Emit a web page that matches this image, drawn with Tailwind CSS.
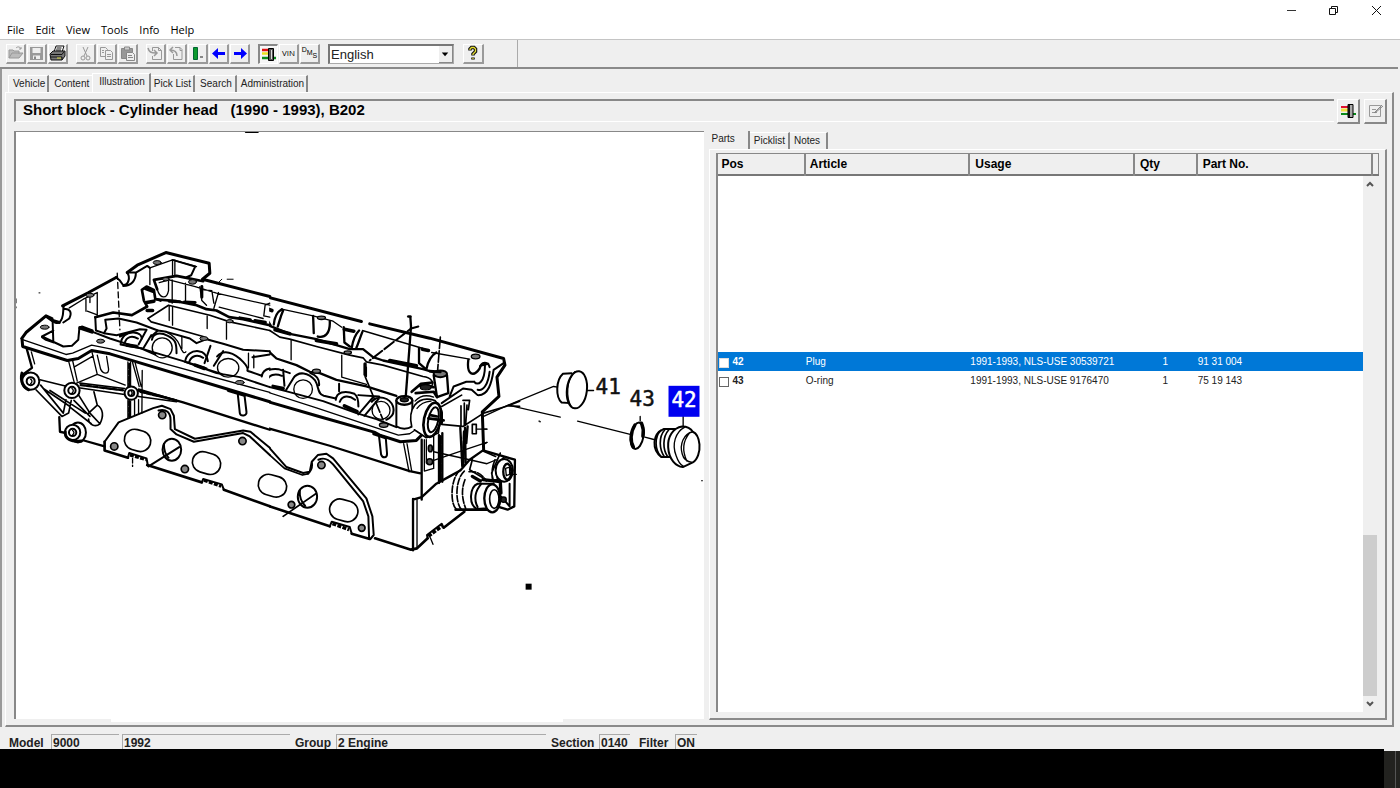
<!DOCTYPE html>
<html lang="en">
<head>
    <meta charset="UTF-8">
    <meta name="viewport" content="width=device-width, initial-scale=1.0">
    <title>Parts Catalogue - Short block - Cylinder head</title>
    <script src="https://cdn.jsdelivr.net/npm/@tailwindcss/browser@4"></script>
</head>
<body class="bg-[#efefef] font-['Liberation_Sans',Arial,sans-serif] text-black min-h-screen flex flex-col">

    <!-- Window bar and menu -->
    <header class="bg-white border-b border-[#c4c4c4]">
        <div class="flex justify-end h-5 gap-[22px] pr-[14px]">
            <button aria-label="Minimize" class="w-5 h-5"><svg viewBox="0 0 20 20" fill="none" stroke="#333"><path d="M5 10.500h9"/></svg></button>
            <button aria-label="Restore" class="w-5 h-5"><svg viewBox="0 0 20 20" fill="none" stroke="#111"><path d="M5.500 8.500h6v6h-6zM7.500 8.500v-2h6v6h-2"/></svg></button>
            <button aria-label="Close" class="w-5 h-5"><svg viewBox="0 0 20 20" fill="none" stroke="#111"><path d="M6 6l9 9M15 6l-9 9"/></svg></button>
        </div>
        <nav class="flex items-center h-[19px] pt-[2px] pl-[7px] gap-[11px] text-[11px] font-['Open_Sans','Noto_Sans',sans-serif]">
            <button>File</button>
            <button>Edit</button>
            <button>View</button>
            <button>Tools</button>
            <button>Info</button>
            <button>Help</button>
        </nav>
    </header>

    <!-- Toolbar -->
    <div class="flex items-center h-[29px] pl-[6px] border-b-2 border-[#8a8a8a] mr-[2px]">
        <div class="flex gap-px">
            <button aria-label="Open" class="w-5 h-5 border-t border-l border-t-white border-l-white border-r-2 border-b-2 border-r-[#9a9a9a] border-b-[#9a9a9a]"><svg viewBox="0 0 17 17" fill="none" stroke="#999"><path d="M2 13V5h4l1 1h5v3M2 13l3-5h11l-4 5z" fill="#bbb"/><path d="M9 3c2-2 4-1 5 1m0-2v2h-2"/></svg></button>
            <button aria-label="Save" class="w-5 h-5 border-t border-l border-t-white border-l-white border-r-2 border-b-2 border-r-[#9a9a9a] border-b-[#9a9a9a]"><svg viewBox="0 0 17 17"><path d="M2 2h13v13H2z" fill="#999"/><path d="M4.500 3h8v5h-8zM5 10.500h7V14H5z" fill="#efefef"/><path d="M6 11.500h2V14H6z" fill="#888"/></svg></button>
            <button aria-label="Print" class="w-5 h-5 border-t border-l border-t-white border-l-white border-r-2 border-b-2 border-r-[#9a9a9a] border-b-[#9a9a9a]"><svg viewBox="0 0 17 17" stroke="#111"><path d="M5 7l2-6h8l-2 6" fill="#fff"/><path d="M7.500 3h5M7 5h5"/><path d="M1 9l3-3h12v5l-3 4H2z" fill="#777"/><path d="M2 9.500h11l2-3M2 12h11v3" fill="none"/><path d="M8 13h4" stroke="#dddd40"/></svg></button>
        </div>
        <div class="flex gap-px ml-2">
            <button aria-label="Cut" class="w-5 h-5 border-t border-l border-t-white border-l-white border-r-2 border-b-2 border-r-[#9a9a9a] border-b-[#9a9a9a]"><svg viewBox="0 0 17 17" fill="none" stroke="#999"><path d="M6 2l4 9M11 2l-4 9"/><circle cx="6" cy="13" r="2"/><circle cx="11" cy="13" r="2"/></svg></button>
            <button aria-label="Copy" class="w-5 h-5 border-t border-l border-t-white border-l-white border-r-2 border-b-2 border-r-[#9a9a9a] border-b-[#9a9a9a]"><svg viewBox="0 0 17 17" fill="#efefef" stroke="#999"><path d="M2.500 2.500h5l2 2v7h-7z"/><path d="M7.500 5.500h5l2 2v7h-7zM9 9.500h4M9 11.500h4M4 5.500h2M4 7.500h2"/></svg></button>
            <button aria-label="Paste" class="w-5 h-5 border-t border-l border-t-white border-l-white border-r-2 border-b-2 border-r-[#9a9a9a] border-b-[#9a9a9a]"><svg viewBox="0 0 17 17" stroke="#888"><path d="M2.500 3.500h11v10h-11z" fill="#999"/><path d="M5.500 2h5v3h-5z" fill="#ccc"/><path d="M7.500 7.500h6l2 2v6h-8z" fill="#eee"/><path d="M9 10.500h4M9 12.500h5"/></svg></button>
        </div>
        <div class="flex gap-px ml-2">
            <button aria-label="Import page" class="w-5 h-5 border-t border-l border-t-white border-l-white border-r-2 border-b-2 border-r-[#9a9a9a] border-b-[#9a9a9a]"><svg viewBox="0 0 17 17" fill="none" stroke="#999"><path d="M5.500 6V2.500h6l3 3v9h-9V11M11.500 2.500v3h3"/><path d="M1 3c1 4 3 5 8 5M7 5l3 3-3 3" stroke-width="1.500"/></svg></button>
            <button aria-label="Export page" class="w-5 h-5 border-t border-l border-t-white border-l-white border-r-2 border-b-2 border-r-[#9a9a9a] border-b-[#9a9a9a]"><svg viewBox="0 0 17 17" fill="none" stroke="#999"><path d="M7 2.500h5l2 2v10H5.500V9M12 2.500v3h2"/><path d="M2 5c4 0 7 1 7 6M5 2L2 5l3 3" stroke-width="1.500"/></svg></button>
            <button aria-label="Marker" class="w-5 h-5 border-t border-l border-t-white border-l-white border-r-2 border-b-2 border-r-[#9a9a9a] border-b-[#9a9a9a]"><svg viewBox="0 0 17 17"><path d="M4.500 2.500h4v12h-4z" fill="#0b9a2c" stroke="#063"/><path d="M11 12h3" stroke="#888" stroke-width="2"/></svg></button>
            <button aria-label="Previous" class="w-5 h-5 border-t border-l border-t-white border-l-white border-r-2 border-b-2 border-r-[#9a9a9a] border-b-[#9a9a9a]"><svg viewBox="0 0 17 17" fill="#00f"><path d="M2 8.500l6-5.500v4h7v3H8v4z"/></svg></button>
            <button aria-label="Next" class="w-5 h-5 border-t border-l border-t-white border-l-white border-r-2 border-b-2 border-r-[#9a9a9a] border-b-[#9a9a9a]"><svg viewBox="0 0 17 17" fill="#00f"><path d="M16 8.500L10 3v4H3v3h7v4z"/></svg></button>
        </div>
        <div class="flex gap-px ml-2">
            <button aria-label="Filter" class="w-5 h-5 bg-[#f6f6f6] border-t-2 border-l-2 border-t-[#888] border-l-[#888] border-r border-b border-r-white border-b-white"><svg viewBox="0 0 17 17"><path d="M2 4h7" stroke="#e01010" stroke-width="2.500"/><path d="M2 7.500h7" stroke="#e8e020" stroke-width="2.500"/><path d="M2 12h14" stroke="#0a8a1a" stroke-width="2.500"/><path d="M8.500 2.500h5v12h-5z" fill="#555" stroke="#000"/><path d="M11.500 4v9" stroke="#ddd"/></svg></button>
            <button class="w-5 h-5 text-[8px] leading-none border-t border-l border-t-white border-l-white border-r-2 border-b-2 border-r-[#9a9a9a] border-b-[#9a9a9a] font-['Open_Sans',sans-serif]">VIN</button>
            <button class="w-5 h-5 text-[7px] leading-none border-t border-l border-t-white border-l-white border-r-2 border-b-2 border-r-[#9a9a9a] border-b-[#9a9a9a] flex justify-center pt-px"><span>D</span><span class="pt-[3px]">M</span><span class="pt-[6px]">S</span></button>
        </div>
        <div class="relative ml-2 w-[126px] h-5">
            <select aria-label="Language" class="block appearance-none w-full h-full bg-white border-t-2 border-l-2 border-r border-b border-t-[#777] border-l-[#777] border-r-[#aaa] border-b-[#aaa] pl-px pt-px text-[13px] leading-[16px] text-[#222]"><option>English</option></select>
            <span class="absolute right-px top-[2px] w-[14px] h-[17px] bg-[#efefef] border-r border-b border-[#888] pointer-events-none"><svg viewBox="0 0 14 17"><path d="M3 7h7l-3.500 4z"/></svg></span>
        </div>
        <button aria-label="Help" class="w-[21px] h-5 ml-[9px] border-t border-l border-t-white border-l-white border-r-2 border-b-2 border-r-[#9a9a9a] border-b-[#9a9a9a]"><svg viewBox="0 0 18 17" fill="none"><path d="M6 5.500V4l1.500-1.500h2.500L11.500 4v2.500L9 9v1.500M9 12.500v2" stroke="#111" stroke-width="3.500"/><path d="M6 5V4l1.500-1.500h2.500L11.500 4v2.500L9 9v1M9 13v1" stroke="#e4dc30" stroke-width="1.300"/></svg></button>
        <div class="self-stretch border-l border-[#aaa] ml-[33px]"></div>
    </div>

    <main class="flex-1 flex flex-col border-l-2 border-[#999] pl-[3px] pr-[6px] pt-[4px]">
        <!-- Main tabs -->
        <div role="tablist" class="flex items-end h-[19px] pl-[3px] text-[10px] text-[#222]">
            <button role="tab" class="h-[17px] pl-1 pr-[2px] pb-px border-t border-l border-t-white border-l-white border-r-2 border-r-[#888]">Vehicle</button>
            <button role="tab" class="h-[17px] pl-[5px] pr-[3px] pb-px border-t border-t-white">Content</button>
            <button role="tab" aria-selected="true" class="h-[19px] pl-[6px] pr-[4px] pb-[3px] border-t border-l border-t-white border-l-white border-r-2 border-r-[#888]">Illustration</button>
            <button role="tab" class="h-[17px] pl-[3px] pr-[2px] pb-px border-t border-t-white border-r-2 border-r-[#888]">Pick List</button>
            <button role="tab" class="h-[17px] pl-[5px] pr-[3px] pb-px border-t border-t-white border-r-2 border-r-[#888]">Search</button>
            <button role="tab" class="h-[17px] pl-1 pr-[2px] pb-px border-t border-t-white border-r-2 border-r-[#888]">Administration</button>
        </div>

        <section class="flex-1 flex flex-col border-t border-l border-t-white border-l-white border-r-2 border-b-2 border-r-[#8a8a8a] border-b-[#8a8a8a] pl-2 pr-[5px] pt-[6px] pb-[5px]">
            <!-- Heading row -->
            <div class="flex">
                <h1 class="flex-1 h-[23px] border-t-2 border-l-2 border-[#888] border-b border-b-white pl-[7px] text-[15px] leading-[18px] font-bold whitespace-pre">Short block - Cylinder head   (1990 - 1993), B202</h1>
                <button aria-label="Filter" class="w-[23px] h-[25px] ml-[3px] border-t border-l border-t-white border-l-white border-r-2 border-b-2 border-r-[#888] border-b-[#888]"><svg viewBox="0 0 20 22"><path d="M3 7h7" stroke="#e01030" stroke-width="2"/><path d="M3 10h7" stroke="#f0e040" stroke-width="3"/><path d="M3 14h15" stroke="#0a8a1a" stroke-width="2"/><path d="M10 4.500h5v13h-5z" fill="#aaa" stroke="#000"/><path d="M11 5v12" stroke="#111" stroke-width="2"/></svg></button>
                <button aria-label="Edit note" class="w-[23px] h-[25px] ml-[4px] border-t border-l border-t-white border-l-white border-r-2 border-b-2 border-r-[#888] border-b-[#888]"><svg viewBox="0 0 20 22" fill="none" stroke="#999"><path d="M4.500 5.500h11v11h-11zM7 9.500h4M7 12.500h5"/><path d="M9 13l8-8M10 13l8-7" stroke="#888"/></svg></button>
            </div>

            <div class="flex-1 flex mt-[7px]">
                <!-- Illustration -->
                <div class="relative w-[calc(50%+3px)] flex-none border-l-2 border-t border-[#888] bg-white mb-px">
                    <svg viewBox="16 132 688 587" preserveAspectRatio="xMinYMin meet" class="block w-full" role="img" aria-label="Cylinder head exploded view" fill="none" stroke="#000" stroke-linejoin="round" stroke-linecap="round">
                        <defs>
                            <clipPath id="right-half"><rect x="58" y="-100" width="900" height="1100"/></clipPath>
                        </defs>
                        <path d="M246 132h12" stroke-width="2"/>
                        <path d="M16 299v4M16 307v1M39 293h1M540 422h1M702 481h1"/>
                        <!-- Left half of the head -->
                        <g transform="translate(10 240) scale(.3333)" stroke-width="4">
                            <!-- deck outline -->
                            <path stroke-width="9" d="M35 296L48 278 108 228 126 236M128 242L148 248M158 198L236 158 320 112M352 98L382 76 468 38 598 70 600 100 578 118 780 170M36 296L38 320 172 362 205 356 245 332 300 342 780 486"/>
                            <path d="M40 300L168 344 188 340 245 316 305 328 780 458"/>
                            <path stroke-width="6" d="M128 240C134 254 150 252 156 236S158 210 162 196M160 208C178 204 188 216 178 236L160 248M318 112L330 122 340 136C356 136 362 112 352 98M352 98L378 98C378 122 364 138 340 138M378 98L412 78 420 84"/>
                            <path stroke-width="6" d="M110 232L128 245 130 304M96 290L130 272M96 290L160 320 186 318 205 300 208 268 216 260 248 272M96 292L108 300 132 308"/>
                            <path d="M178 204L220 178 262 158M228 178v36M240 170v18M262 158v74M232 214l28 10M420 84v50M420 84L488 60 560 80M488 60v50M495 60v50"/>
                            <path stroke-width="6" d="M488 60L556 80 544 106 530 112"/>
                            <path stroke-dasharray="18 10" d="M322 100L330 270"/>
                            <path stroke-width="3" d="M622 132L636 118M652 118h18"/>
                            <!-- inner rails -->
                            <path stroke-width="8" d="M432 120L500 108 530 114 580 124M432 120L442 148M396 150L410 140 432 150 436 176 452 182M396 150L402 182 412 200 366 226 310 218 256 232"/>
                            <path d="M442 148C450 176 470 180 476 152V124M448 128L478 120 556 140 620 160 780 196M527 130v52M487 120v70M570 140L576 182 590 196M582 150L606 152 612 190M626 158L612 206M628 202L760 236M780 232L762 228 766 196 780 190"/>
                            <path stroke-width="8" d="M436 178L500 184 560 196 590 208 620 212 658 232 700 238 780 256"/>
                            <path stroke-width="9" stroke-dasharray="32 14" d="M478 184L560 188M690 234L770 248M576 140v44"/>
                            <path stroke-width="5" d="M414 236L476 196 600 226 660 246 780 272M414 236L424 246 580 290"/>
                            <path d="M478 198v44M488 202v54M592 228v38M650 248v50"/>
                            <path stroke-width="6" d="M256 232L258 272 282 280 290 266 286 240 326 236 380 248 444 272 470 276 540 296 560 310 590 298 640 312 700 330 780 334"/>
                            <path stroke-width="6" d="M282 280L320 286 390 268 410 270M410 270L386 314M424 286L400 326M444 272L424 290M356 278L330 290M602 318L584 370M640 334L612 378"/>
                            <path d="M516 290v36M716 340v44M732 346v38M468 276Q500 290 510 318T528 336"/>
                            <!-- bearing caps and journals -->
                            <path stroke-width="6" d="M332 314C334 290 350 276 372 278S394 290 396 296M344 310C350 290 366 286 384 296M526 366C528 344 546 332 566 334S592 350 594 364M538 366C546 346 564 344 580 354M332 314L396 326M526 366L590 386M426 300C430 280 450 276 474 288S500 310 500 340M622 350C640 328 672 336 700 366S700 390 722 396L756 408M728 352L780 344M756 410Q758 390 780 386"/>
                            <path stroke-width="11" d="M210 264L246 276M352 316L380 320M556 376L584 386M408 146l22 8M410 188l22-4M412 212h16"/>
                            <circle cx="457" cy="324" r="30" fill="#fff"/><ellipse cx="655" cy="384" rx="32" ry="28" fill="#fff"/>
                            <path stroke-width="6" d="M248 276L300 296 400 328 520 364 620 400 690 412 780 442M395 326L436 344M590 388L640 404"/>
                            <!-- stud holes -->
                            <g fill="#777" stroke-width="3"><ellipse cx="104" cy="262" rx="13" ry="6"/><ellipse cx="240" cy="166" rx="12" ry="6"/><ellipse cx="442" cy="68" rx="12" ry="6"/><ellipse cx="548" cy="126" rx="12" ry="7"/><ellipse cx="468" cy="118" rx="10" ry="5"/><ellipse cx="272" cy="304" rx="12" ry="6"/><ellipse cx="582" cy="296" rx="12" ry="6"/><ellipse cx="690" cy="428" rx="13" ry="6"/><ellipse cx="660" cy="244" rx="10" ry="5"/></g>
                            <!-- left wall -->
                            <path stroke-width="7" d="M50 326L66 384 34 408 40 420M382 452L450 468 520 488 780 570M148 532L150 576 168 580M214 600L284 620"/>
                            <path d="M64 336L74 372M176 364L194 432M188 362L202 424M246 336L262 404 200 430M192 382L250 348M262 404L346 436M262 346L272 388C280 404 296 404 296 388L290 350M354 366V440M362 366V440M368 368L388 440M376 370L394 440M354 482V534M362 484V530M374 482V526M386 480V524M397 392L396 520"/>
                            <path stroke-width="7" stroke-dasharray="14 5" d="M358 372v66M358 484v46M212 436L344 452M392 456L500 482"/>
                            <path stroke-width="5" d="M90 420L172 440M92 436L160 520 168 480M78 450L156 530 176 520 184 482M100 446L180 500M120 452L226 520M210 430L344 446M206 444L344 464M206 466L240 520 270 552M192 482L240 530M252 456L262 496M262 496C280 506 282 530 270 552 256 564 236 554 236 538M236 520L262 496M180 502L244 552M386 448L500 482M386 470L500 486"/>
                            <g fill="#fff" stroke-width="6"><circle cx="62" cy="424" r="26"/><circle cx="62" cy="424" r="12"/><circle cx="186" cy="452" r="23"/><circle cx="186" cy="452" r="11"/><circle cx="364" cy="460" r="20"/><circle cx="364" cy="460" r="9"/><ellipse cx="204" cy="578" rx="24" ry="30"/><circle cx="188" cy="578" r="23"/><circle cx="188" cy="578" r="11"/></g>
                            <path stroke-width="9" d="M36 400C30 424 40 444 56 450M166 576C164 596 180 606 214 604"/>
                            <path d="M62 418q8 6 0 14M186 446q8 6 0 14M188 572q8 6 0 14M364 454q6 6 0 12"/>
                            <path stroke-width="6" fill="#fff" d="M684 464L690 520C692 530 712 530 710 516L704 466"/>
                            <path stroke-width="10" d="M656 452L704 466"/>
                            <!-- manifold flange -->
                            <path stroke-width="6" d="M284 606L326 548 430 505 456 498 482 508 492 528 495 568 555 597 700 572 722 576 780 624M446 512C470 506 482 520 482 540V568L500 584 552 606 700 580 720 590 780 646"/>
                            <path stroke-width="8" d="M284 606L284 632 354 654M412 676L576 728M642 750L780 800"/>
                            <path stroke-width="6" d="M354 654L358 640 410 656 414 678M576 728L580 718 636 734 642 750"/>
                            <path stroke-width="9" stroke-dasharray="12 4" stroke-linecap="butt" d="M360 646L408 660M582 722L634 740"/>
                            <path stroke-dasharray="14 6" d="M368 656v24"/>
                            <rect x="343" y="571" width="80" height="62" rx="31" transform="rotate(16 383 602)" stroke-width="5"/>
                            <rect x="547" y="639" width="86" height="62" rx="31" transform="rotate(16 590 670)" stroke-width="5"/>
                            <rect x="745" y="707" width="86" height="62" rx="31" transform="rotate(16 788 738)" stroke-width="5"/>
                            <ellipse cx="486" cy="630" rx="28" ry="33" stroke-width="6"/><path d="M462 612Q462 640 476 654M416 680L508 622" stroke-width="6"/>
                            <g fill="#888" stroke-width="5"><circle cx="457" cy="526" r="11"/><circle cx="313" cy="620" r="11"/><circle cx="525" cy="688" r="11"/><circle cx="698" cy="604" r="11"/></g>
                        </g>
                        <!-- Right half of the head -->
                        <g transform="translate(250 280) scale(.3333)" stroke-width="4" clip-path="url(#right-half)">
                            <path stroke-width="9" d="M0 38L335 125M360 132L540 175 762 236 766 256 742 292 748 350 698 396 702 510"/>
                            <path d="M0 62L56 80M96 88L190 108 250 124 276 142M338 152L500 200 520 206M546 218L660 238M0 76L46 88"/>
                            <path stroke-width="7" d="M44 82L46 110 62 136M96 88C82 96 74 110 72 134M100 92C92 110 90 120 84 140M190 108L192 160M240 124C242 160 226 176 204 170M282 142L284 188 300 200M328 152C314 166 310 180 306 204M338 156C330 176 326 190 320 204M508 204V250L526 266M560 218C546 226 536 240 530 268M656 240C650 290 674 290 690 266 694 250 704 246 714 252"/>
                            <path stroke-width="11" d="M46 84l20 8M284 148l28 6M518 208l18 4M0 124L40 128M76 150L120 162M200 182L260 192M420 242L500 258"/>
                            <path stroke-width="7" d="M0 134L60 138 120 162 200 178 260 196 300 208 340 208 370 232 400 242 520 268 548 276"/>
                            <path stroke-width="5" d="M0 150L60 152 90 172 120 178 200 200 300 226 340 234 350 246 400 256 520 290C548 292 552 312 546 318"/>
                            <path d="M124 182v58M276 226v66M276 292L350 314M350 262v28"/>
                            <path stroke-width="10" d="M346 252v32"/>
                            <path stroke-width="7" d="M56 214L80 236 140 256 180 276 210 280 260 300 350 320 440 348"/>
                            <path stroke-width="6" d="M36 300C38 276 60 264 86 268L120 280M50 306C56 284 76 280 96 288M100 270L104 318M134 290L108 332M130 296C146 272 176 278 196 302 208 320 202 342 222 348L258 356M258 360C260 338 284 330 314 342 326 350 326 370 326 380M270 366C278 346 298 346 316 360M326 346L388 350M372 350L326 404M388 356L344 408M366 366C384 344 420 352 430 380 436 402 424 414 410 420M182 280Q210 290 208 316M268 312v22"/>
                            <circle cx="160" cy="328" r="28" fill="#fff"/><circle cx="394" cy="392" r="27" fill="#fff"/>
                            <path stroke-width="11" d="M70 320L100 326M284 378L322 396"/>
                            <path stroke-width="6" d="M0 302L60 322 108 334 220 364 320 400 380 418 440 442"/>
                            <path stroke-width="4" d="M0 320L200 384 380 444 446 466 480 462 512 440"/>
                            <path stroke-width="9" d="M0 350L200 408 376 458 390 466 452 486 500 482 520 462"/>
                            <!-- studs and construction lines -->
                            <path stroke-width="7" d="M482 112L484 140 468 352"/>
                            <path stroke-width="8" d="M476 110h6"/>
                            <path stroke-width="6" stroke-dasharray="36 8" d="M506 140L484 146 360 242"/>
                            <path stroke-width="5" stroke-dasharray="34 7" d="M572 172L564 270M346 290L400 420"/>
                            <path stroke-width="6" fill="#fff" d="M440 362V440Q464 454 488 440V362"/>
                            <ellipse cx="464" cy="362" rx="24" ry="13" fill="#fff" stroke-width="7"/><ellipse cx="464" cy="360" rx="12" ry="6" fill="#222"/>
                            <path stroke-width="7" fill="#fff" d="M552 286L562 352 596 340 592 286"/>
                            <ellipse cx="572" cy="282" rx="20" ry="10" fill="#777" stroke-width="6"/>
                            <path stroke-width="8" d="M486 336L514 312 548 308M512 318L552 322M498 340L552 336 562 352M540 274L572 276"/>
                            <ellipse cx="528" cy="322" rx="16" ry="8" fill="#222"/>
                            <ellipse cx="402" cy="436" rx="13" ry="7" fill="#777"/><ellipse cx="215" cy="114" rx="12" ry="5" fill="#777"/><ellipse cx="678" cy="230" rx="13" ry="7" fill="#777"/><ellipse cx="294" cy="218" rx="11" ry="5" fill="#777"/><ellipse cx="200" cy="274" rx="12" ry="6" fill="#777"/>
                            <!-- cam end bearing -->
                            <path stroke-width="5" fill="#fff" d="M486 440C474 390 500 344 556 362L576 392 566 460 530 474 494 450"/>
                            <path d="M496 364C510 348 530 344 552 352M502 386Q516 366 544 364"/>
                            <ellipse cx="548" cy="420" rx="25" ry="52" transform="rotate(12 548 420)" fill="#fff" stroke-width="8"/>
                            <ellipse cx="551" cy="420" rx="15" ry="38" transform="rotate(12 551 420)" stroke-width="6"/>
                            <path stroke-width="8" d="M536 416L582 422M542 406L562 410M576 398V430"/>
                            <path stroke-width="6" d="M576 370L640 326 666 330 684 346C716 348 726 310 732 270L762 250M600 350L612 320 650 306 674 306M674 306C684 320 706 308 706 256M692 258L716 252 720 262M684 330C702 336 716 310 720 276"/>
                            <path stroke-width="5" d="M576 434L640 440 702 400 776 378 810 364M776 378L810 380M576 380L636 346M640 362L660 362 656 390M634 378V438M644 370V436M652 376L648 436"/>
                            <!-- right end walls -->
                            <path stroke-width="7" d="M0 430L240 498 480 574 516 582M516 480V660M568 466V610M578 460V606M632 444L638 560M646 444L648 548M654 440L650 490"/>
                            <path stroke-width="9" stroke-dasharray="22 6" d="M572 470V600M644 456L640 556"/>
                            <path d="M524 480V574L552 566V470M462 492L478 576M472 492L486 574M530 480v70"/>
                            <path stroke-width="6" fill="#fff" d="M388 470L394 524C398 536 412 536 412 522L408 472"/><path stroke-width="9" d="M372 462L408 474"/>
                            <g fill="#555" stroke-width="5"><ellipse cx="542" cy="506" rx="6" ry="10"/><ellipse cx="540" cy="546" rx="9" ry="9"/><path fill="#fff" d="M668 434h12v28h-12z"/></g>
                            <path d="M680 448h32M552 516L660 540 712 552 740 540M552 542L640 512 712 488"/>
                            <path stroke-width="7" d="M516 652L560 612 600 590 632 572 660 540 700 512 796 540 794 680 774 690 730 676M490 660L516 652M490 658V812"/>
                            <path d="M502 660V804"/>
                            <!-- water outlet and side boss -->
                            <path stroke-width="5" d="M668 540L660 570 712 602 740 600M700 514L738 530M752 520L726 580 732 606M762 534C746 548 738 580 744 606M736 540Q724 570 728 596"/>
                            <path stroke-width="5" stroke-dasharray="20 6" d="M630 572C600 600 602 680 622 690M644 574C616 600 616 670 636 690M658 576Q690 572 710 604M646 600Q630 640 648 686"/>
                            <path stroke-width="8" d="M618 690L680 690 712 690"/>
                            <ellipse cx="764" cy="572" rx="26" ry="34" fill="#fff" stroke-width="6"/><ellipse cx="773" cy="576" rx="12" ry="24" stroke-width="7"/><path d="M768 566l12-4v22l-10 4zM780 584h20"/>
                            <path stroke-width="6" fill="#fff" d="M684 612C660 622 656 674 682 688L712 686 732 612z"/><path stroke-width="6" d="M694 614C676 634 672 660 684 682"/>
                            <ellipse cx="728" cy="656" rx="24" ry="42" fill="#fff" stroke-width="7"/><ellipse cx="734" cy="658" rx="14" ry="28" stroke-width="5"/>
                            <path stroke-width="10" d="M700 600L752 606 754 640M668 590l24 14"/>
                            <path stroke-width="6" d="M780 612V680M754 650L780 680"/><circle cx="762" cy="660" r="8" fill="#222"/>
                            <!-- manifold flange, lower edge -->
                            <g transform="translate(0 420)">
                                <path stroke-width="6" d="M0 38L60 86 110 142 160 160 180 156 186 126 204 106 230 102 250 116 350 236 368 290 372 346 362 358M206 120C224 112 236 118 250 134L340 244 356 290 358 354M186 126Q190 150 174 162"/>
                                <path stroke-width="5" d="M60 106L104 146 158 166 176 162"/>
                                <rect x="239" y="241" width="86" height="62" rx="31" transform="rotate(16 282 272)" stroke-width="5"/>
                                <ellipse cx="173" cy="231" rx="29" ry="33" stroke-width="6"/><path d="M150 212Q148 240 166 258" stroke-width="6"/>
                                <path stroke-width="5" d="M100 290L198 222"/>
                                <g fill="#888" stroke-width="5"><circle cx="215" cy="136" r="11"/><circle cx="125" cy="255" r="10"/><circle cx="336" cy="325" r="10"/></g>
                                <path stroke-width="8" d="M0 240L240 320M306 342L360 358M376 356L484 390 502 386 534 356M582 324L644 276"/>
                                <path stroke-width="6" d="M240 320L246 306 300 322 306 342M534 356L532 346 576 312 582 324"/>
                                <path stroke-width="10" stroke-dasharray="12 4" stroke-linecap="butt" d="M248 312L298 330M536 350L576 320"/>
                                <path d="M542 354L550 374"/>
                            </g>
                        </g>
                        <!-- Loose parts -->
                        <g transform="translate(480 350) scale(.3333)" stroke-width="4">
                            <path d="M12 200L85 166 222 110 234 112M85 166L242 202M294 214L452 254M496 262L526 270M324 122h18M482 200v14M611 200v30M178 214h2M12 238h10M12 284l10-6"/>
                            <path fill="#fff" stroke-width="6" d="M276 70L250 72C228 92 228 142 246 158L272 160"/>
                            <ellipse cx="292" cy="120" rx="30" ry="56" transform="rotate(7 292 120)" fill="#fff" stroke-width="6"/><path d="M286 66C260 90 258 144 276 172"/>
                            <ellipse cx="473" cy="258" rx="19" ry="40" transform="rotate(10 473 258)" stroke-width="6"/><path stroke-width="10" d="M466 226C452 248 452 276 462 292M486 220Q494 240 490 260"/>
                            <path fill="#fff" stroke-width="6" d="M592 238L552 238C518 252 516 300 546 322L576 322z"/>
                            <path stroke-width="5" d="M544 242C524 262 526 300 544 320M556 240C536 262 540 300 554 320M568 240C548 262 550 300 564 320"/>
                            <path fill="#fff" stroke-width="6" d="M608 230C580 234 564 262 566 292 568 330 590 350 610 352L640 338C654 330 662 306 660 284 658 264 650 250 640 246 634 236 622 230 608 230z"/>
                            <path d="M616 232C588 246 576 284 590 318 596 336 604 346 612 350M640 246C612 252 600 284 608 312 612 328 622 336 638 338M630 250Q600 286 622 334"/>
                        </g>
                        <!-- Callouts -->
                        <rect x="669" y="386" width="31" height="31" fill="#0000f0" stroke="none"/>
                        <g stroke="#111" stroke-width=".5" fill="#111" font-family="'DejaVu Sans Mono', monospace" font-size="21">
                            <text x="596" y="394">41</text>
                            <text x="630" y="406">43</text>
                            <text x="672" y="407" fill="#fff" stroke="#fff">42</text>
                        </g>
                        <path d="M526 584h6v6h-6z" fill="#000" stroke="none"/>
                    </svg>
                    <div class="absolute left-[95px] right-[141px] -bottom-[3px] h-[3px] bg-white"></div>
                </div>

                <!-- Parts -->
                <div class="flex-1 flex flex-col ml-[5px]">
                    <div role="tablist" class="flex items-end h-[18px] text-[10px] text-[#222]">
                        <button role="tab" aria-selected="true" class="h-[18px] pl-[3px] pr-[13px] pb-[3px] border-r-2 border-r-[#888]">Parts</button>
                        <button role="tab" class="h-[17px] pl-[4px] pr-[3px] pb-px border-t border-t-white border-r-2 border-r-[#888]">Picklist</button>
                        <button role="tab" class="h-[17px] pl-[4px] pr-[6px] pb-px border-t border-t-white border-r-2 border-r-[#888]">Notes</button>
                    </div>
                    <div class="flex-1 flex border-t border-l border-t-white border-l-white border-r-2 border-b-2 border-r-[#8a8a8a] border-b-[#8a8a8a] pl-[6px] pr-[6px] pt-[3px] pb-[6px]">
                        <div class="relative flex-1 bg-white border-l-2 border-t border-[#888]">
                            <table class="w-full table-fixed border-collapse text-left">
                                <colgroup><col class="w-[13.2%]"><col class="w-[24.9%]"><col class="w-[24.9%]"><col class="w-[9.5%]"><col><col class="w-[7px]"></colgroup>
                                <thead class="bg-[#efefef] text-[12px] leading-[19px] h-[21px]">
                                    <tr class="border-b-2 border-[#777]">
                                        <th class="pl-1 border-r-2 border-[#888]">Pos</th>
                                        <th class="pl-1 border-r-2 border-[#888]">Article</th>
                                        <th class="pl-[5px] border-r-2 border-[#888]">Usage</th>
                                        <th class="pl-[5px] border-r-2 border-[#888]">Qty</th>
                                        <th class="pl-[5px] border-r-2 border-[#888]">Part No.</th>
                                        <th class="border-r border-[#888]"></th>
                                    </tr>
                                </thead>
                                <tbody class="text-[10px] leading-[19px] text-[#222] whitespace-nowrap">
                                    <tr class="h-[177px]"><td colspan="6"></td></tr>
                                    <tr class="bg-[#0078d7] text-white h-[19px]">
                                        <td><label class="flex items-center gap-1 pl-px font-bold"><input type="checkbox" class="appearance-none size-[10px] mt-[3px] bg-white border border-[#ddd]">42</label></td>
                                        <td class="pl-px">Plug</td>
                                        <td class="pl-px">1991-1993, NLS-USE 30539721</td>
                                        <td class="text-center">1</td>
                                        <td class="pl-px" colspan="2">91 31 004</td>
                                    </tr>
                                    <tr class="h-[19px]">
                                        <td><label class="flex items-center gap-1 pl-px font-bold"><input type="checkbox" class="appearance-none size-[10px] mt-[3px] bg-white border border-[#666]">43</label></td>
                                        <td class="pl-px">O-ring</td>
                                        <td class="pl-px">1991-1993, NLS-USE 9176470</td>
                                        <td class="text-center">1</td>
                                        <td class="pl-px" colspan="2">75 19 143</td>
                                    </tr>
                                </tbody>
                            </table>
                            <!-- Scrollbar -->
                            <div class="absolute right-0 top-[22px] bottom-0 w-4 pr-[2px] bg-[#efefef] flex flex-col">
                                <button aria-label="Scroll up" class="h-4"><svg viewBox="0 0 14 16" fill="none" stroke="#555" stroke-width="2"><path d="M4 10l3-3 3 3"/></svg></button>
                                <div class="flex-1 flex flex-col justify-end"><div class="h-[32%] bg-[#cdcdcd]"></div></div>
                                <button aria-label="Scroll down" class="h-4"><svg viewBox="0 0 14 16" fill="none" stroke="#555" stroke-width="2"><path d="M4 6l3 3 3-3"/></svg></button>
                            </div>
                        </div>
                    </div>
                </div>
            </div>
        </section>
    </main>

    <!-- Status bar -->
    <div class="flex items-end h-[21px] mt-px pl-[9px] text-[12px] leading-[16px] font-bold text-[#222]">
        <span class="w-[42px] h-[15px] pt-px">Model</span>
        <span class="w-[68px] h-[15px] pl-px border-t border-l border-[#aaa]">9000</span>
        <span class="w-[168px] h-[15px] ml-[3px] pl-px border-t border-l border-[#aaa]">1992</span>
        <span class="w-[41px] h-[15px] ml-[5px] pt-px">Group</span>
        <span class="w-[210px] h-[15px] pl-px border-t border-l border-[#aaa]">2 Engine</span>
        <span class="w-[48px] h-[15px] ml-[5px] pt-px">Section</span>
        <span class="w-[31px] h-[15px] pl-px border-t border-l border-[#aaa]">0140</span>
        <span class="w-[36px] h-[15px] ml-[9px] pt-px">Filter</span>
        <span class="w-[22px] h-[15px] pl-px border-t border-l border-[#aaa]">ON</span>
    </div>

    <footer class="flex h-[39px] bg-black">
        <div class="flex-1"></div>
        <div class="w-4 bg-[#22221f] border-t-2 border-[#efefef] flex justify-end pr-1"><div class="w-px bg-[#555]"></div></div>
    </footer>

</body>
</html>
